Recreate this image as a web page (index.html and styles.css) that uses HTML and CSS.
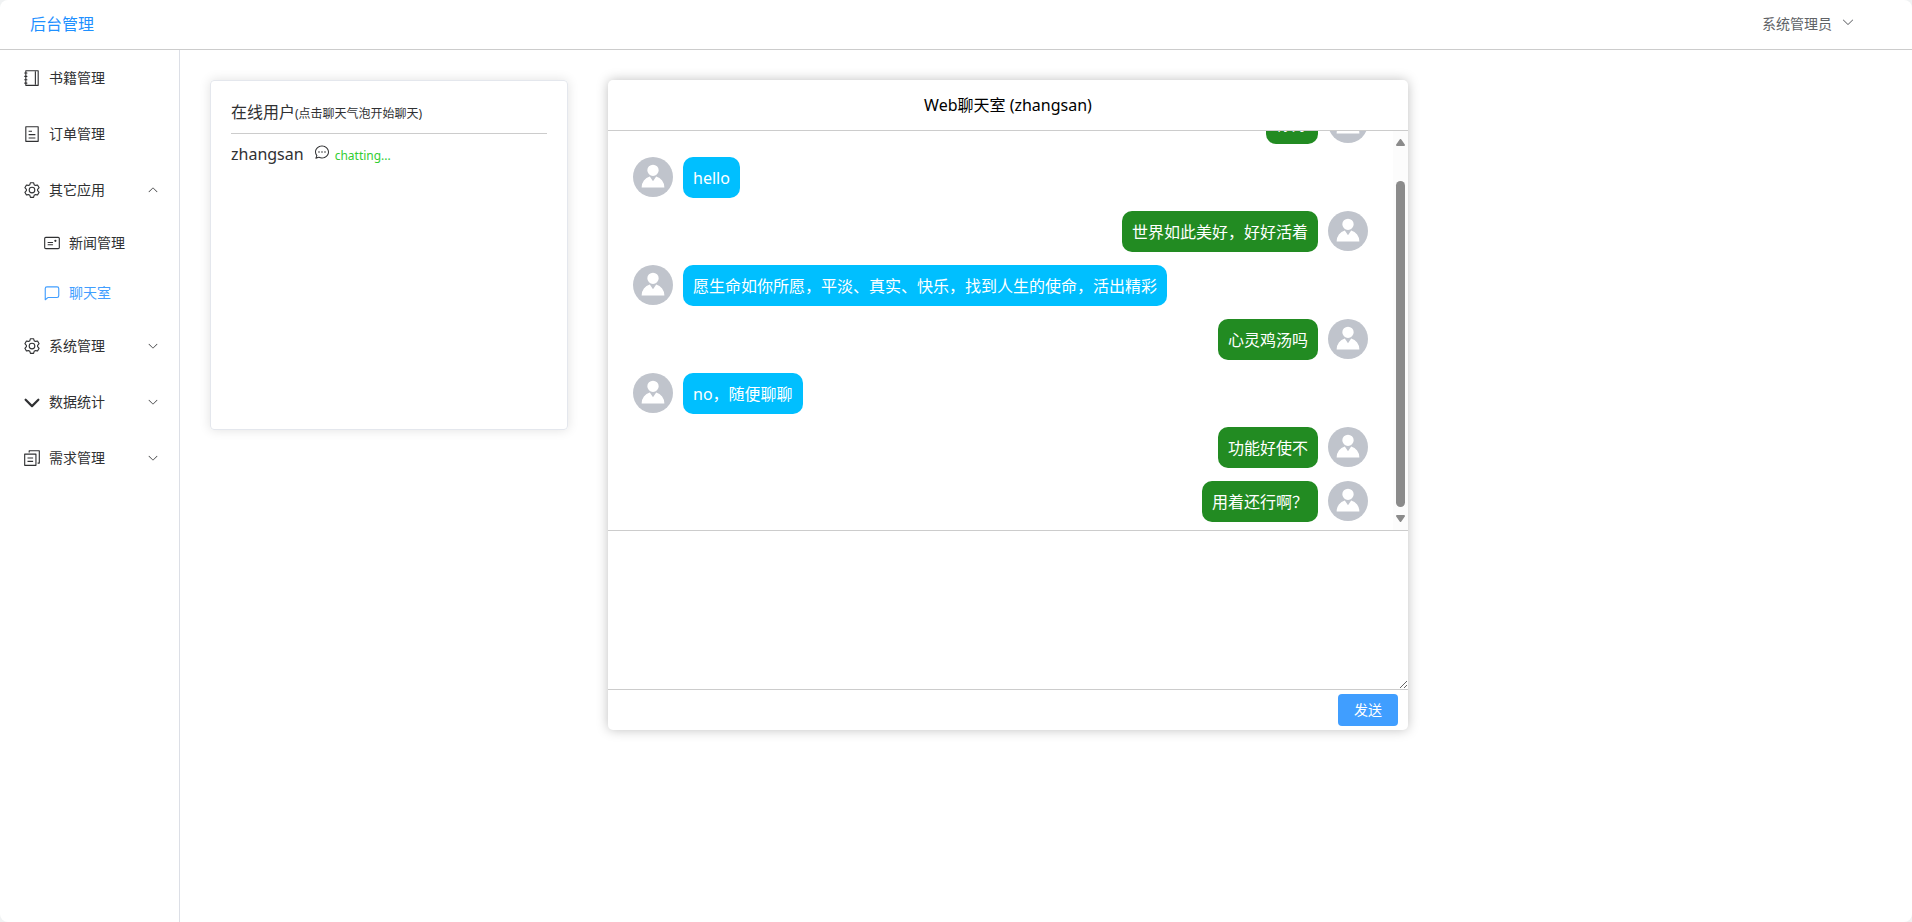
FILE: index.html
```html
<!DOCTYPE html>
<html lang="zh-CN">

<head>
    <meta charset="UTF-8">
    <meta name="viewport" content="width=device-width, initial-scale=1.0">
    <title>后台管理</title>
    <link rel="stylesheet" href="styles.css">
</head>

<body>
    <!-- icons -->
    <svg class="icon-sprite" aria-hidden="true">
        <symbol id="arrow-down" viewBox="0 0 1024 1024">
            <path d="M831.872 340.864 512 652.672 192.128 340.864a30.592 30.592 0 0 0-42.752 0 29.12 29.12 0 0 0 0 41.6L489.664 714.24a32 32 0 0 0 44.672 0l340.288-331.712a29.12 29.12 0 0 0 0-41.728 30.592 30.592 0 0 0-42.752 0z" />
        </symbol>
        <symbol id="arrow-down-bold" viewBox="0 0 1024 1024">
            <path d="M104.704 338.752a64 64 0 0 1 90.496 0l316.8 316.8 316.8-316.8a64 64 0 0 1 90.496 90.496L557.248 791.296a64 64 0 0 1-90.496 0L104.704 429.248a64 64 0 0 1 0-90.496z" />
        </symbol>
        <symbol id="notebook" viewBox="0 0 1024 1024">
            <path d="M192 128v768h640V128H192zm-32-64h704a32 32 0 0 1 32 32v832a32 32 0 0 1-32 32H160a32 32 0 0 1-32-32V96a32 32 0 0 1 32-32z" />
            <path d="M672 128h64v768h-64zM96 192h128q32 0 32 32t-32 32H96q-32 0-32-32t32-32zm0 192h128q32 0 32 32t-32 32H96q-32 0-32-32t32-32zm0 192h128q32 0 32 32t-32 32H96q-32 0-32-32t32-32zm0 192h128q32 0 32 32t-32 32H96q-32 0-32-32t32-32z" />
        </symbol>
        <symbol id="tickets" viewBox="0 0 1024 1024">
            <path d="M192 128v768h640V128H192zm-32-64h704a32 32 0 0 1 32 32v832a32 32 0 0 1-32 32H160a32 32 0 0 1-32-32V96a32 32 0 0 1 32-32zm160 448h384v64H320v-64zm0-192h192v64H320v-64zm0 384h384v64H320v-64z" />
        </symbol>
        <symbol id="setting" viewBox="0 0 1024 1024">
            <path d="M600.704 64a32 32 0 0 1 30.464 22.208l35.2 109.376c14.784 7.232 28.928 15.36 42.432 24.512l112.384-24.192a32 32 0 0 1 34.432 15.36L944.32 364.8a32 32 0 0 1-4.032 37.504l-77.12 85.12a357.12 357.12 0 0 1 0 49.024l77.12 85.248a32 32 0 0 1 4.032 37.504l-88.704 153.6a32 32 0 0 1-34.432 15.296L708.8 803.904c-13.44 9.088-27.648 17.28-42.368 24.512l-35.264 109.376A32 32 0 0 1 600.704 960H423.296a32 32 0 0 1-30.464-22.208L357.696 828.48a351.616 351.616 0 0 1-42.56-24.64l-112.32 24.256a32 32 0 0 1-34.432-15.36L79.68 659.2a32 32 0 0 1 4.032-37.504l77.12-85.248a357.12 357.12 0 0 1 0-48.896l-77.12-85.248A32 32 0 0 1 79.68 364.8l88.704-153.6a32 32 0 0 1 34.432-15.296l112.32 24.256c13.568-9.152 27.776-17.408 42.56-24.64l35.2-109.312A32 32 0 0 1 423.232 64H600.64zm-23.424 64H446.72l-36.352 113.088-24.512 11.968a294.113 294.113 0 0 0-34.816 20.096l-22.656 15.36-116.224-25.088-65.28 113.152 79.68 88.192-1.92 27.136a293.12 293.12 0 0 0 0 40.192l1.92 27.136-79.808 88.192 65.344 113.152 116.224-25.024 22.656 15.296a294.113 294.113 0 0 0 34.816 20.096l24.512 11.968L446.72 896h130.688l36.48-113.152 24.448-11.904a288.282 288.282 0 0 0 34.752-20.096l22.592-15.296 116.288 25.024 65.28-113.152-79.744-88.192 1.92-27.136a293.12 293.12 0 0 0 0-40.256l-1.92-27.136 79.808-88.128-65.344-113.152-116.288 24.96-22.592-15.232a287.616 287.616 0 0 0-34.752-20.096l-24.448-11.904L577.344 128zM512 320a192 192 0 1 1 0 384 192 192 0 0 1 0-384zm0 64a128 128 0 1 0 0 256 128 128 0 0 0 0-256z" />
        </symbol>
        <symbol id="postcard" viewBox="0 0 1024 1024">
            <path d="M160 224a32 32 0 0 0-32 32v512a32 32 0 0 0 32 32h704a32 32 0 0 0 32-32V256a32 32 0 0 0-32-32H160zm0-64h704a96 96 0 0 1 96 96v512a96 96 0 0 1-96 96H160a96 96 0 0 1-96-96V256a96 96 0 0 1 96-96z" />
            <path d="M704 320a64 64 0 1 1 0 128 64 64 0 0 1 0-128zM288 448h256q32 0 32 32t-32 32H288q-32 0-32-32t32-32zm0 128h256q32 0 32 32t-32 32H288q-32 0-32-32t32-32z" />
        </symbol>
        <symbol id="chat-square" viewBox="0 0 1024 1024">
            <path d="M273.536 736H800a64 64 0 0 0 64-64V256a64 64 0 0 0-64-64H224a64 64 0 0 0-64 64v570.88L273.536 736zM296 800 147.968 918.4A32 32 0 0 1 96 893.44V256a128 128 0 0 1 128-128h576a128 128 0 0 1 128 128v416a128 128 0 0 1-128 128H296z" />
        </symbol>
        <symbol id="document-copy" viewBox="0 0 1024 1024">
            <path d="M128 320v576h576V320H128zm-32-64h640a32 32 0 0 1 32 32v640a32 32 0 0 1-32 32H96a32 32 0 0 1-32-32V288a32 32 0 0 1 32-32zM960 96v704a32 32 0 0 1-32 32h-96v-64h64V128H384v64h-64V96a32 32 0 0 1 32-32h576a32 32 0 0 1 32 32zM256 672h320v64H256v-64zm0-192h320v64H256v-64z" />
        </symbol>
        <symbol id="chat-dot" viewBox="0 0 1024 1024">
            <path d="m174.72 855.68 135.296-45.12 23.68 11.84C388.096 849.536 448.576 864 512 864c211.84 0 384-166.784 384-352S723.84 160 512 160 128 326.784 128 512c0 69.12 24.96 139.264 70.848 199.232l22.08 28.8-46.272 115.584zm-45.248 82.56A32 32 0 0 1 89.6 896l58.368-145.92C94.72 680.32 64 596.864 64 512 64 299.904 256 96 512 96s448 203.904 448 416-192 416-448 416a461.056 461.056 0 0 1-206.912-48.384l-175.616 58.56z" />
            <path d="M512 563.2a51.2 51.2 0 1 1 0-102.4 51.2 51.2 0 0 1 0 102.4zm192 0a51.2 51.2 0 1 1 0-102.4 51.2 51.2 0 0 1 0 102.4zm-384 0a51.2 51.2 0 1 1 0-102.4 51.2 51.2 0 0 1 0 102.4z" />
        </symbol>
        <symbol id="avatar" viewBox="0 0 1024 1024">
            <path d="M628.736 528.896A416 416 0 0 1 928 928H96a415.872 415.872 0 0 1 299.264-399.104L512 704l116.736-175.104zM720 304a208 208 0 1 1-416 0 208 208 0 0 1 416 0z" />
        </symbol>
        <symbol id="scroll-up" viewBox="0 0 9 7">
            <path d="M4.5 1 8 6H1z" stroke="currentColor" stroke-width="2" stroke-linejoin="round" />
        </symbol>
        <symbol id="scroll-down" viewBox="0 0 9 7">
            <path d="M4.5 6 8 1H1z" stroke="currentColor" stroke-width="2" stroke-linejoin="round" />
        </symbol>
    </svg>

    <div class="app">
        <header class="header">
            <a class="logo" href="#">后台管理</a>
            <button class="user-menu" type="button">
                系统管理员
                <svg class="user-arrow"><use href="#arrow-down" /></svg>
            </button>
        </header>

        <div class="container">
            <nav class="sidebar">
                <a class="menu-item" href="#">
                    <svg class="menu-icon"><use href="#notebook" /></svg>
                    <span>书籍管理</span>
                </a>
                <a class="menu-item" href="#">
                    <svg class="menu-icon"><use href="#tickets" /></svg>
                    <span>订单管理</span>
                </a>
                <button class="menu-item" type="button" aria-expanded="true">
                    <svg class="menu-icon"><use href="#setting" /></svg>
                    <span>其它应用</span>
                    <svg class="menu-arrow opened"><use href="#arrow-down" /></svg>
                </button>
                <div class="sub-menu">
                    <a class="menu-item" href="#">
                        <svg class="menu-icon"><use href="#postcard" /></svg>
                        <span>新闻管理</span>
                    </a>
                    <a class="menu-item active" href="#">
                        <svg class="menu-icon"><use href="#chat-square" /></svg>
                        <span>聊天室</span>
                    </a>
                </div>
                <button class="menu-item" type="button" aria-expanded="false">
                    <svg class="menu-icon"><use href="#setting" /></svg>
                    <span>系统管理</span>
                    <svg class="menu-arrow"><use href="#arrow-down" /></svg>
                </button>
                <button class="menu-item" type="button" aria-expanded="false">
                    <svg class="menu-icon"><use href="#arrow-down-bold" /></svg>
                    <span>数据统计</span>
                    <svg class="menu-arrow"><use href="#arrow-down" /></svg>
                </button>
                <button class="menu-item" type="button" aria-expanded="false">
                    <svg class="menu-icon"><use href="#document-copy" /></svg>
                    <span>需求管理</span>
                    <svg class="menu-arrow"><use href="#arrow-down" /></svg>
                </button>
            </nav>

            <main class="main">
                <section class="user-card">
                    <div class="user-title">在线用户<span class="user-tip">(点击聊天气泡开始聊天)</span></div>
                    <div class="user-row">
                        <span>zhangsan</span>
                        <button class="chat-btn" type="button" aria-label="chat">
                            <svg class="chat-icon"><use href="#chat-dot" /></svg>
                        </button>
                        <span class="chatting">chatting...</span>
                    </div>
                </section>

                <section class="chat">
                    <div class="chat-title">Web聊天室 (zhangsan)</div>
                    <div class="chat-body">
                        <div class="chat-list" id="chatList">
                            <div class="message mine">
                                <span class="avatar"><svg><use href="#avatar" /></svg></span>
                                <div class="bubble">你好</div>
                            </div>
                            <div class="message">
                                <span class="avatar"><svg><use href="#avatar" /></svg></span>
                                <div class="bubble">hello</div>
                            </div>
                            <div class="message mine">
                                <span class="avatar"><svg><use href="#avatar" /></svg></span>
                                <div class="bubble">世界如此美好，好好活着</div>
                            </div>
                            <div class="message">
                                <span class="avatar"><svg><use href="#avatar" /></svg></span>
                                <div class="bubble">愿生命如你所愿，平淡、真实、快乐，找到人生的使命，活出精彩</div>
                            </div>
                            <div class="message mine">
                                <span class="avatar"><svg><use href="#avatar" /></svg></span>
                                <div class="bubble">心灵鸡汤吗</div>
                            </div>
                            <div class="message">
                                <span class="avatar"><svg><use href="#avatar" /></svg></span>
                                <div class="bubble">no，随便聊聊</div>
                            </div>
                            <div class="message mine">
                                <span class="avatar"><svg><use href="#avatar" /></svg></span>
                                <div class="bubble">功能好使不</div>
                            </div>
                            <div class="message mine">
                                <span class="avatar"><svg><use href="#avatar" /></svg></span>
                                <div class="bubble">用着还行啊？</div>
                            </div>
                        </div>
                        <div class="scrollbar">
                            <button class="scroll-btn" id="scrollUp" type="button" aria-label="向上滚动">
                                <svg><use href="#scroll-up" /></svg>
                            </button>
                            <div class="scroll-track">
                                <div class="scroll-thumb" id="scrollThumb"></div>
                            </div>
                            <button class="scroll-btn" id="scrollDown" type="button" aria-label="向下滚动">
                                <svg><use href="#scroll-down" /></svg>
                            </button>
                        </div>
                    </div>
                    <form id="chatForm">
                        <textarea class="chat-input" id="chatInput" aria-label="消息"></textarea>
                        <div class="chat-footer">
                            <button class="send-btn" type="submit">发送</button>
                        </div>
                    </form>
                </section>
            </main>
        </div>
    </div>

    <script>
        const chatList = document.getElementById("chatList");
        const chatInput = document.getElementById("chatInput");
        const thumb = document.getElementById("scrollThumb");

        // keep the thumb in step with the list
        function updateThumb() {
            const total = chatList.scrollHeight;
            thumb.style.height = (chatList.clientHeight / total) * 100 + "%";
            thumb.style.marginTop = (chatList.scrollTop / total) * thumb.parentNode.clientHeight + "px";
        }

        function scrollToBottom() {
            chatList.scrollTop = chatList.scrollHeight;
            updateThumb();
        }

        chatList.addEventListener("scroll", updateThumb);
        document.getElementById("scrollUp").addEventListener("click", () => chatList.scrollBy(0, -40));
        document.getElementById("scrollDown").addEventListener("click", () => chatList.scrollBy(0, 40));

        document.getElementById("chatForm").addEventListener("submit", function (e) {
            e.preventDefault();
            const text = chatInput.value.trim();
            if (!text) {
                return;
            }
            const message = chatList.querySelector(".mine").cloneNode(true);
            message.querySelector(".bubble").textContent = text;
            chatList.appendChild(message);
            chatInput.value = "";
            scrollToBottom();
        });

        scrollToBottom();
    </script>
</body>

</html>
```
FILE: styles.css
```css
* {
    box-sizing: border-box;
}

body {
    margin: 0;
    background: #f0f2f3;
    color: #303133;
    font-family: "Noto Sans", "Noto Sans CJK SC", sans-serif;
    font-size: 16px;
    line-height: 21px;
}

button,
textarea {
    font-family: inherit;
}

button {
    border: none;
    background: none;
    padding: 0;
    cursor: pointer;
}

a {
    text-decoration: none;
}

svg {
    fill: currentColor;
    flex-shrink: 0;
}

.icon-sprite {
    display: none;
}

.app {
    display: flex;
    flex-direction: column;
    min-height: 100vh;
    background: #fff;
    border-radius: 8px;
}

/* header */
.header {
    display: flex;
    justify-content: space-between;
    align-items: center;
    height: 50px;
    padding: 0 57px 0 30px;
    border-bottom: 1px solid #ccc;
}

.logo {
    color: #1e90ff;
}

.user-menu {
    display: flex;
    align-items: center;
    gap: 9px;
    padding-bottom: 3px;
    color: #606266;
    font-size: 14px;
}

.user-arrow {
    width: 14px;
    height: 14px;
    margin-bottom: 3px;
}

.container {
    display: flex;
    flex: 1;
}

/* sidebar */
.sidebar {
    flex-shrink: 0;
    width: 180px;
    border-right: 1px solid #dcdfe6;
}

.menu-item {
    display: flex;
    align-items: center;
    width: 100%;
    height: 56px;
    padding: 0 20px;
    color: #303133;
    font-size: 14px;
}

.menu-item span {
    padding-bottom: 2px;
}

.menu-icon {
    width: 18px;
    height: 18px;
    margin: 0 8px 0 3px;
}

.menu-arrow {
    width: 12px;
    height: 12px;
    margin-left: auto;
}

.menu-arrow.opened {
    transform: rotate(180deg);
}

.sub-menu .menu-item {
    height: 50px;
    padding-left: 40px;
}

.sub-menu .menu-item.active {
    color: #409eff;
}

.main {
    display: flex;
    flex: 1;
    align-items: flex-start;
    gap: 40px;
    padding: 30px;
}

/* online users */
.user-card {
    width: 358px;
    min-height: 350px;
    padding: 20px;
    border: 1px solid #e4e7ed;
    border-radius: 4px;
    box-shadow: 0 0 12px rgba(0, 0, 0, 0.12);
}

.user-title {
    padding: 1px 0 9px;
    border-bottom: 1px solid #ccc;
}

.user-tip {
    font-size: 12px;
}

.user-row {
    display: flex;
    align-items: baseline;
    padding-top: 10px;
}

.chat-btn {
    margin: 0 5px 0 10px;
    color: #303133;
}

.chat-icon {
    display: block;
    width: 16px;
    height: 16px;
}

.chatting {
    color: #32cd32;
    font-size: 12px;
}

/* chat room */
.chat {
    width: 800px;
    border-radius: 5px;
    box-shadow: 0 0 12px rgba(0, 0, 0, 0.25);
    overflow: hidden;
}

.chat-title {
    padding: 15px 0 14px;
    border-bottom: 1px solid #ccc;
    color: #000;
    text-align: center;
}

.chat-body {
    display: flex;
    height: 400px;
    border-bottom: 1px solid #ccc;
}

.chat-list {
    flex: 1;
    padding: 0 25px;
    overflow-y: auto;
    scrollbar-width: none;
}

.scrollbar {
    display: flex;
    flex-direction: column;
    width: 15px;
    background: #fcfcfc;
    color: #8b8b8b;
}

.scroll-btn {
    display: flex;
    justify-content: center;
    align-items: center;
    height: 23px;
    color: inherit;
}

.scroll-btn svg {
    width: 9px;
    height: 7px;
}

.scroll-track {
    display: flow-root;
    flex: 1;
    padding: 0 3px;
}

.scroll-thumb {
    border-radius: 5px;
    background: #8b8b8b;
}

.message {
    display: flex;
    align-items: flex-start;
    gap: 10px;
    padding: 5px 0 8px;
}

.message.mine {
    flex-direction: row-reverse;
}

.avatar {
    display: flex;
    flex-shrink: 0;
    justify-content: center;
    align-items: center;
    width: 40px;
    height: 40px;
    padding-bottom: 2px;
    border-radius: 50%;
    background: #c0c4cc;
    color: #fff;
}

.avatar svg {
    width: 28px;
    height: 28px;
}

.bubble {
    padding: 11px 10px 9px;
    border-radius: 10px;
    background: #00bfff;
    color: #fff;
}

.mine .bubble {
    background: #228b22;
}

.chat-input {
    display: block;
    width: 100%;
    height: 159px;
    padding: 10px;
    border: none;
    border-bottom: 1px solid #ccc;
    outline: none;
    font-size: 16px;
    resize: vertical;
}

.chat-footer {
    display: flex;
    justify-content: flex-end;
    padding: 4px 10px;
}

.send-btn {
    width: 60px;
    height: 32px;
    padding-bottom: 2px;
    border-radius: 4px;
    background: #409eff;
    color: #fff;
    font-size: 14px;
}
```
